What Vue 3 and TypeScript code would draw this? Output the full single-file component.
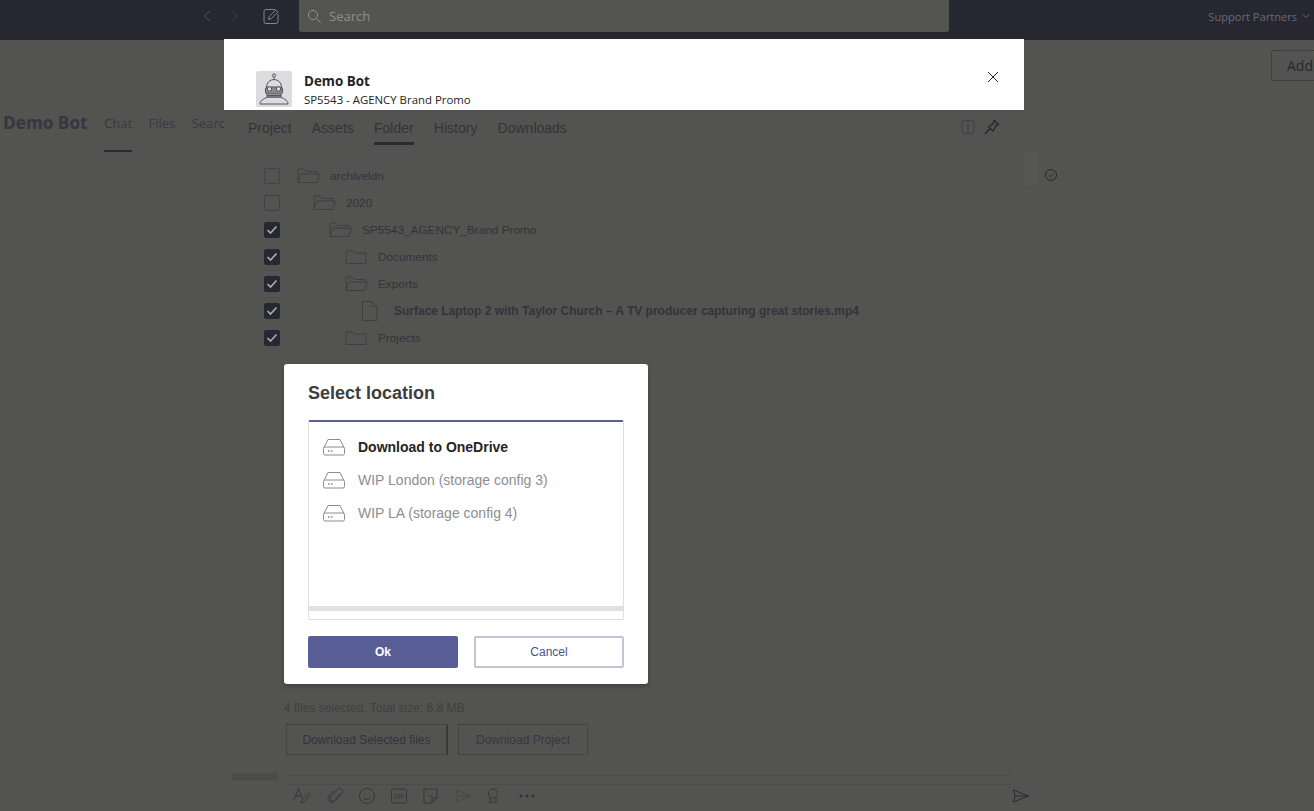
<template>
  <div class="app">
    <header class="topbar">
      <div class="nav">
        <svg width="10" height="14" viewBox="0 0 10 14"><path d="M7.500 2 2.500 7l5 5" /></svg>
        <svg width="10" height="14" viewBox="0 0 10 14" class="fwd"><path d="M2.500 2l5 5-5 5" /></svg>
        <svg width="18" height="18" viewBox="0 0 18 18" class="compose">
          <path d="M13 2.500H4a2 2 0 0 0-2 2v10a2 2 0 0 0 2 2h10a2 2 0 0 0 2-2V7" />
          <path d="M6.500 12.500l.7-3L14 2.800l2 2-6.800 6.900z" />
        </svg>
      </div>
      <div class="search">
        <svg width="15" height="15" viewBox="0 0 15 15"><circle cx="6" cy="6" r="4.600" /><path d="M9.500 9.500l4.300 4.300" /></svg>
        <span>Search</span>
      </div>
      <div class="org">
        <span>Support Partners</span>
        <svg width="8" height="6" viewBox="0 0 8 6"><path d="M1 1.500l3 3 3-3" /></svg>
      </div>
    </header>

    <div class="page-head">
      <button class="add">Add</button>
    </div>
    <div class="team-row">
      <strong class="team-name">Demo Bot</strong>
      <nav class="team-tabs">
        <span class="team-tab active">Chat</span>
        <span class="team-tab">Files</span>
        <span class="team-tab">Search</span>
      </nav>
    </div>

    <svg class="seen" width="14" height="14" viewBox="0 0 14 14">
      <circle cx="7" cy="7" r="5.500" /><path d="M4.800 7.200l1.500 1.400 2.900-2.900" />
    </svg>
    <div class="scroll-thumb"></div>

    <section class="task">
      <div class="task-head">
        <div class="bot-logo">
          <svg width="36" height="36" viewBox="0 0 36 36">
            <circle cx="18" cy="4.500" r="1.600" class="ln" />
            <path d="M18 6v3" class="ln" />
            <path d="M10.500 17v-1a7.500 7.500 0 0 1 15 0v1" class="ln" />
            <rect x="9.500" y="16" width="17" height="7" rx="2" class="ln" />
            <circle cx="13.500" cy="18" r="2.200" class="ln" />
            <circle cx="22.500" cy="18" r="2.200" class="ln" />
            <path d="M11 23v3h14v-3M11 24.500h14" class="ln" />
            <path d="M4 33c0-4 5.500-6.500 9-7h10c3.500.5 9 3 9 7z" class="ln" />
          </svg>
        </div>
        <div class="bot-text">
          <strong>Demo Bot</strong>
          <span>SP5543 - AGENCY Brand Promo</span>
        </div>
        <svg class="close" width="12" height="12" viewBox="0 0 12 12"><path d="M1 1l10 10M11 1 1 11" /></svg>
      </div>

      <div class="task-tabs">
        <span v-for="t in tabs" :key="t" class="task-tab" :class="{ active: t === 'Folder' }">{{ t }}</span>
        <div class="task-tools">
          <svg width="14" height="14" viewBox="0 0 14 14"><rect x="1" y=".5" width="12" height="13" rx="2" /><path d="M7 .5v13" /></svg>
          <svg class="pin" width="16" height="16" viewBox="0 0 16 16">
            <path d="M10 1.500l4.500 4-2.500 1-2 4-1 1.500-4.500-4 1.500-1 3.500-2.500z" /><path d="M5.500 10 1 15" />
          </svg>
        </div>
      </div>

      <ul class="tree">
        <li v-for="row in rows" :key="row.name" class="tree-row">
          <span class="check" :class="{ on: row.checked }">
            <svg v-if="row.checked" width="12" height="10" viewBox="0 0 12 10"><path d="M1.500 5l3 3 6-6.500" /></svg>
          </span>
          <span class="tree-item" :style="{ paddingLeft: row.depth * 16 + 'px' }">
            <svg v-if="row.kind === 'open'" width="24" height="16" viewBox="0 0 24 16" class="ficon">
              <path d="M1 14.500V2a1 1 0 0 1 1-1h5l2.500 2.500H20V6" /><path d="M1 14.500 4 6h18.500l-2.500 8.500z" />
            </svg>
            <svg v-else-if="row.kind === 'closed'" width="24" height="16" viewBox="0 0 24 16" class="ficon">
              <path d="M1 3a1 1 0 0 1 1-1h5.500L10 4h11v10.500H1z" />
            </svg>
            <svg v-else width="24" height="20" viewBox="0 0 24 20" class="ficon file">
              <path d="M1.500 .5h9l5.500 5v14H1.500z" /><path d="M10.500 .5v5H16" />
            </svg>
            <span class="tree-label" :class="{ bold: row.kind === 'file' }">{{ row.name }}</span>
          </span>
        </li>
      </ul>

      <div class="task-foot">
        <p class="summary">4 files selected. Total size: 6.8 MB</p>
        <div class="foot-btns">
          <button class="foot-btn first">Download Selected files</button>
          <button class="foot-btn second">Download Project</button>
        </div>
      </div>

      <div class="compose-lines">
        <div class="compose-tab"></div>
      </div>
      <div class="toolbar">
        <svg width="20" height="20" viewBox="0 0 20 20"><path d="M1.500 15 6.500 2.500 10 12M3.500 10h5" /><path d="M9 16c1-3 5-7 8-9l1.500 1.500c-2 3-5.500 6.500-8.500 8.500z" /></svg>
        <svg width="18" height="18" viewBox="0 0 18 18"><path d="M14.500 6 8 13.500a2.500 2.500 0 0 1-3.500-3.500l7-8a3.200 3.200 0 0 1 4.500 4.500L8.500 15a4.200 4.200 0 0 1-6-5.500L8 3" /></svg>
        <svg width="18" height="18" viewBox="0 0 18 18"><circle cx="9" cy="9" r="7.500" /><path d="M5.500 10.800c1.800 2.400 5.200 2.400 7 0M6.500 6.500v1M11.500 6.500v1" /></svg>
        <svg width="18" height="18" viewBox="0 0 18 18"><rect x="1.500" y="2" width="15" height="14" rx="2" /><text x="9" y="11.700" class="gif">GIF</text></svg>
        <svg width="18" height="18" viewBox="0 0 18 18"><path d="M2 2h13v9l-5 5H2zM15 11h-5v5" /><path d="M5.500 8.500c1 1.500 3 1.500 4.500.5M6 5.500v.5M10.500 5.500v.5" /></svg>
        <svg class="plane" width="18" height="16" viewBox="0 0 18 16"><path d="M1.500 1.500 16.500 8 1.500 14.500 4 8zM4 8h12.500" /></svg>
        <svg width="14" height="18" viewBox="0 0 14 18"><circle cx="7" cy="6.500" r="4.500" /><path d="M4 10.500V16l3-1.500 3 1.500v-5.500" /></svg>
        <svg width="18" height="18" viewBox="0 0 18 18" class="dots"><circle cx="3" cy="9" r="1.400" /><circle cx="9" cy="9" r="1.400" /><circle cx="15" cy="9" r="1.400" /></svg>
        <svg class="send" width="18" height="16" viewBox="0 0 18 16"><path d="M1.500 2 16.500 8 1.500 14 3 8zM3 8h13.500" /></svg>
      </div>

      <div class="locator">
        <h2>Select location</h2>
        <div class="loc-list">
          <div v-for="(loc, i) in locations" :key="loc" class="loc-row" :class="{ picked: i === 0 }">
            <svg width="22" height="18" viewBox="0 0 22 18">
              <path d="M1 9.500 5 1.500h12l4 8" />
              <rect x=".5" y="9" width="21" height="8" rx="1.500" />
              <path d="M5 13h1.500M8 13h1.500" class="dark" />
            </svg>
            <span>{{ loc }}</span>
          </div>
          <div class="loc-scroll"></div>
        </div>
        <div class="loc-btns">
          <button class="ok">Ok</button>
          <button class="cancel">Cancel</button>
        </div>
      </div>
    </section>
  </div>
</template>

<script setup lang="ts">
type Row = { name: string; depth: number; kind: 'open' | 'closed' | 'file'; checked: boolean }

const tabs = ['Project', 'Assets', 'Folder', 'History', 'Downloads']

const rows: Row[] = [
  { name: 'archiveldn', depth: 0, kind: 'open', checked: false },
  { name: '2020', depth: 1, kind: 'open', checked: false },
  { name: 'SP5543_AGENCY_Brand Promo', depth: 2, kind: 'open', checked: true },
  { name: 'Documents', depth: 3, kind: 'closed', checked: true },
  { name: 'Exports', depth: 3, kind: 'open', checked: true },
  { name: 'Surface Laptop 2 with Taylor Church – A TV producer capturing great stories.mp4', depth: 4, kind: 'file', checked: true },
  { name: 'Projects', depth: 3, kind: 'closed', checked: true },
]

const locations = ['Download to OneDrive', 'WIP London (storage config 3)', 'WIP LA (storage config 4)']
</script>

<style>
html, body { margin: 0; background: #535351; }
</style>

<style scoped>
.app {
  position: relative;
  width: 1314px;
  height: 811px;
  overflow: hidden;
  background: #535351;
  font-family: "Liberation Sans", Arial, sans-serif;
  color: #33333b;
}
svg { display: block; fill: none; stroke: #33333b; stroke-width: 1; flex: none; }
button { font-family: inherit; padding: 0; }

.topbar {
  display: flex;
  align-items: center;
  height: 40px;
  background: #262731;
}
.nav { display: flex; align-items: center; margin-left: 202px; width: 97px; height: 32px; align-self: flex-start; }
.nav svg { stroke: #53555a; }
.nav .fwd { margin-left: 18px; stroke: #404149; }
.nav .compose { margin-left: 22px; stroke: #858586; }
.search {
  display: flex;
  align-items: center;
  gap: 7px;
  align-self: flex-start;
  width: 650px;
  height: 32px;
  padding-left: 8px;
  box-sizing: border-box;
  background: #545451;
  border-radius: 0 0 3px 3px;
  font-size: 13px;
  color: #8f8f8b;
  font-family: "Open Sans", sans-serif;
}
.search svg { stroke: #8f8f8b; }
.org {
  display: flex;
  align-items: center;
  gap: 5px;
  margin-left: auto;
  margin-right: 4px;
  margin-top: -8px;
  font-size: 11.100px;
  color: #6a6b70;
  font-family: "Open Sans", sans-serif;
}
.org svg { stroke: #6a6b70; }

.page-head { display: flex; padding: 10px 0 0 1271px; height: 41px; }
.add {
  width: 70px;
  height: 31px;
  flex: none;
  border: 1px dotted #2e2e35;
  background: transparent;
  border-radius: 2px;
  font-family: "Open Sans", sans-serif;
  font-size: 14px;
  color: #272731;
  text-align: left;
  padding-left: 15px;
}
.team-row { display: flex; align-items: flex-start; padding: 20px 0 0 3px; }
.team-name { font-family: "Open Sans", sans-serif; font-size: 17.200px; line-height: 23px; color: #363640; font-weight: 700; width: 101px; }
.team-tabs { display: flex; gap: 16.500px; }
.team-tab { font-family: "Open Sans", sans-serif; font-size: 13px; line-height: 24px; height: 41px; color: #393942; }
.team-tab.active { box-shadow: inset 0 -2px 0 #2a2a34; }

.seen { position: absolute; left: 1044px; top: 168px; stroke: #292933; }
.scroll-thumb { position: absolute; left: 1024px; top: 152px; width: 14px; height: 33px; background: #565654; }

.task {
  position: absolute;
  left: 224px;
  top: 39px;
  width: 800px;
  height: 772px;
  background: #535351;
  display: flex;
  flex-direction: column;
}
.task-head {
  display: flex;
  height: 71px;
  flex: none;
  background: #fff;
  padding: 32px 0 0 32px;
  box-sizing: border-box;
  overflow: hidden;
  font-family: "Open Sans", sans-serif;
  color: #252424;
}
.bot-logo { width: 36px; height: 36px; background: #dcdcdf; border-radius: 2px; flex: none; }
.bot-text { display: flex; flex-direction: column; margin-left: 12px; padding-top: 1px; }
.bot-text strong { font-size: 13.400px; line-height: 18px; font-weight: 700; }
.bot-text span { font-size: 11.400px; line-height: 19px; }
.close { margin-left: auto; margin-right: 25px; stroke: #252424; }

.task-tabs {
  display: flex;
  gap: 20.200px;
  height: 36px;
  margin: 0 24px;
  flex: none;
  border-bottom: 1px solid #50504e;
  align-items: flex-start;
}
.task-tab { font-size: 14px; line-height: 36px; height: 35px; color: #33333b; }
.task-tab.active { box-shadow: inset 0 -3px 0 #2a2a34; }
.task-tools { margin-left: auto; display: flex; gap: 9px; align-items: center; height: 34px; }
.task-tools svg:first-child { stroke: #3e3e45; }
.task-tools .pin { stroke: #25252f; stroke-width: 1.300; }

.tree { list-style: none; margin: 15px 0 0; padding: 0 0 0 40px; }
.tree-row { display: flex; align-items: center; height: 27px; }
.check {
  width: 16px;
  height: 16px;
  box-sizing: border-box;
  border: 1px solid #42424b;
  border-radius: 2px;
  display: flex;
  align-items: center;
  justify-content: center;
  flex: none;
}
.check.on { background: #262731; border-color: #262731; }
.check svg { stroke: #aeaeae; stroke-width: 1.600; }
.tree-item { display: flex; align-items: center; margin-left: 17px; }
.ficon { width: 24px; stroke: #3e3e45; }
.tree-label { margin-left: 9px; font-size: 11.800px; color: #33333b; white-space: nowrap; }
.tree-label.bold { font-size: 12px; font-weight: 700; }

.task-foot { margin-top: auto; padding-left: 60px; }
.summary { margin: 0; font-size: 12px; line-height: 14px; color: #40403e; }
.foot-btns { display: flex; gap: 10px; margin-top: 9px; padding-left: 2px; }
.foot-btn {
  height: 31px;
  background: transparent;
  border: 1px dotted #353535;
  font-size: 12px;
  color: #33333b;
}
.foot-btn.first { width: 162px; border-right: 2px solid #3a3a3a; }
.foot-btn.second { width: 130px; color: #383840; }

.compose-lines {
  position: relative;
  margin: 20px 14px 0 66px;
  height: 8px;
  border-top: 1px dotted #434341;
  border-bottom: 1px dotted #434341;
  flex: none;
}
.compose-tab { position: absolute; left: -58px; top: -3px; width: 46px; height: 8px; background: #4c4c49; }
.toolbar {
  display: flex;
  align-items: center;
  height: 26px;
  box-sizing: border-box;
  padding: 0 0 4px 68px;
  gap: 14px;
  flex: none;
}
.toolbar svg { stroke: #373741; }
.toolbar .plane { stroke: #46464b; }
.toolbar .dots { fill: #33333b; stroke: none; margin-left: 4px; }
.toolbar .send { margin-left: auto; margin-right: -6px; stroke: #2a2a34; }
.ln { stroke: #55555a; fill: none; }
circle.ln { fill: #dcdcdf; }
rect.ln { fill: #8a8a8e; }
.gif { font-size: 7px; font-weight: 400; text-anchor: middle; fill: #373741; stroke: none; font-family: "Liberation Sans", sans-serif; }

.locator {
  position: absolute;
  left: 60px;
  top: 325px;
  width: 364px;
  height: 320px;
  box-sizing: border-box;
  padding: 18px 24px 0;
  background: #fff;
  border-radius: 3px;
  box-shadow: 0 2px 4px rgba(0, 0, 0, 0.25);
}
.locator h2 { margin: 0; font-size: 18px; line-height: 22px; font-weight: 700; color: #3d3d3d; }
.loc-list {
  position: relative;
  margin-top: 16px;
  height: 200px;
  box-sizing: border-box;
  border: 1px solid #dfdfe2;
  border-top: 2px solid #5b5e96;
  border-radius: 2px;
  padding-top: 8px;
}
.loc-row { display: flex; align-items: center; height: 33px; padding-left: 14px; font-size: 14px; color: #8e8e90; }
.loc-row svg { stroke: #8c8c90; margin-right: 13px; }
.loc-row svg .dark { stroke: #444; }
.loc-row.picked { font-weight: 700; color: #252424; }
.loc-scroll { position: absolute; left: 0; right: 0; bottom: 8px; height: 5px; background: #e1e1e3; }
.loc-btns { display: flex; justify-content: space-between; margin-top: 16px; }
.loc-btns button { width: 150px; height: 32px; border-radius: 2px; font-size: 12px; }
.ok { background: #595d96; border: none; color: #fff; font-weight: 700; }
.cancel { background: #fff; border: 2px solid #c5c4d6; color: #4f5288; }
</style>
